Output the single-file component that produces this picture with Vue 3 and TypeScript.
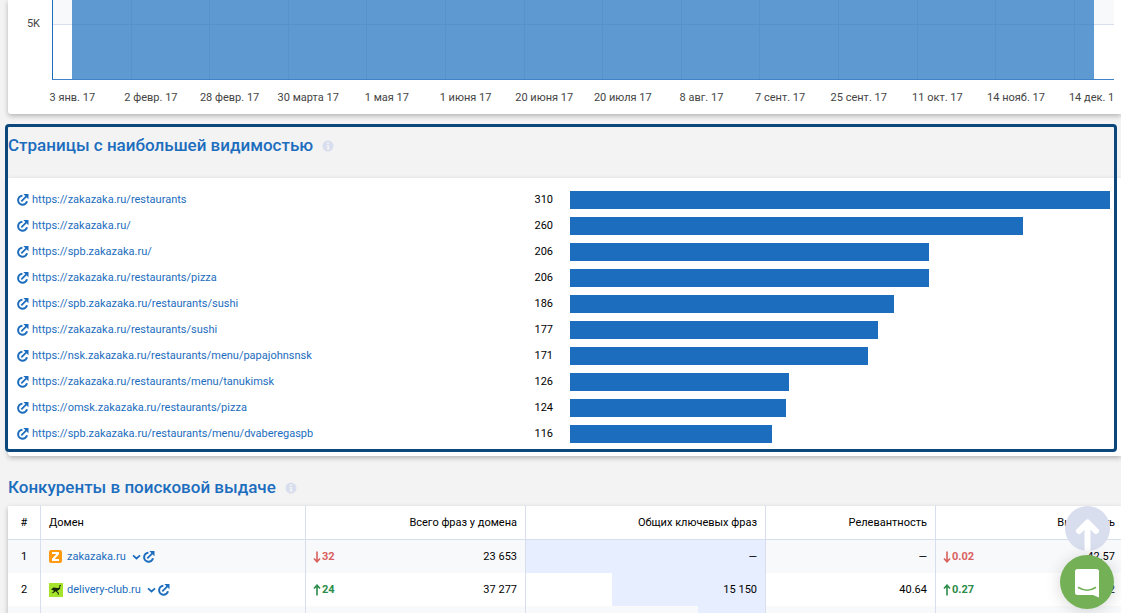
<script setup lang="ts">
interface PageRow {
  url: string
  count: number
}

interface Competitor {
  id: number
  domain: string
  logo: 'z' | 'ostrich'
  phrases: string
  phrasesDelta: number
  common: string
  share: number
  relevance: string
  visibility: string
  visibilityDelta: number
}

const dates: string[] = [
  '3 янв. 17', '2 февр. 17', '28 февр. 17', '30 марта 17', '1 мая 17', '1 июня 17', '20 июня 17',
  '20 июля 17', '8 авг. 17', '7 сент. 17', '25 сент. 17', '11 окт. 17', '14 нояб. 17', '14 дек. 17',
]

const pages: PageRow[] = [
  { url: 'https://zakazaka.ru/restaurants', count: 310 },
  { url: 'https://zakazaka.ru/', count: 260 },
  { url: 'https://spb.zakazaka.ru/', count: 206 },
  { url: 'https://zakazaka.ru/restaurants/pizza', count: 206 },
  { url: 'https://spb.zakazaka.ru/restaurants/sushi', count: 186 },
  { url: 'https://zakazaka.ru/restaurants/sushi', count: 177 },
  { url: 'https://nsk.zakazaka.ru/restaurants/menu/papajohnsnsk', count: 171 },
  { url: 'https://zakazaka.ru/restaurants/menu/tanukimsk', count: 126 },
  { url: 'https://omsk.zakazaka.ru/restaurants/pizza', count: 124 },
  { url: 'https://spb.zakazaka.ru/restaurants/menu/dvaberegaspb', count: 116 },
]

const maxCount = Math.max(...pages.map((p) => p.count))

const competitors: Competitor[] = [
  {
    id: 1, domain: 'zakazaka.ru', logo: 'z', phrases: '23 653', phrasesDelta: -32,
    common: '—', share: 100, relevance: '—', visibility: '42.57', visibilityDelta: -0.02,
  },
  {
    id: 2, domain: 'delivery-club.ru', logo: 'ostrich', phrases: '37 277', phrasesDelta: 24,
    common: '15 150', share: 64, relevance: '40.64', visibility: '40.12', visibilityDelta: 0.27,
  },
]
</script>

<template>
  <main class="page">
    <svg class="defs" aria-hidden="true">
      <symbol id="external" viewBox="0 0 12 12">
        <path d="M5.4 1.7A4.500 4.500 0 1 0 10 7.200" fill="none" stroke="currentColor" stroke-width="2" />
        <path d="M4.300 7.400 9.300 2.400" fill="none" stroke="currentColor" stroke-width="1.800" />
        <path d="M6.300 0H11.500V5.200Z" fill="currentColor" />
      </symbol>
      <symbol id="info" viewBox="0 0 12 12">
        <circle cx="6" cy="6" r="5.5" fill="#d9deee" />
        <path d="M5.2 2.5h1.8v1.4H5.200zM4.600 4.900H6.900V8.300h.7v1.100H4.600V8.300h.7V6h-.7z" fill="#f3f3f3" />
      </symbol>
      <symbol id="arrow" viewBox="0 0 8 12">
        <path d="M4 11.500V2M1 4.500 4 1.200 7 4.500" fill="none" stroke="currentColor" stroke-width="1.600" />
      </symbol>
    </svg>

    <section class="card chart" aria-label="График">
      <div class="plot-row">
        <span class="y-label">5K</span>
        <div class="plot">
          <div class="area"></div>
          <div class="grid-columns">
            <i v-for="n in 13" :key="n"></i>
          </div>
        </div>
      </div>
      <div class="x-axis">
        <div class="x-labels">
          <span v-for="d in dates" :key="d">{{ d }}</span>
        </div>
      </div>
    </section>

    <section class="top-pages">
      <h2>Страницы с наибольшей видимостью <svg class="info"><use href="#info" /></svg></h2>
      <ul class="card bars">
        <li v-for="p in pages" :key="p.url">
          <div class="page-name">
            <a href="#"><svg class="external"><use href="#external" /></svg>{{ p.url }}</a>
            <span>{{ p.count }}</span>
          </div>
          <div><div class="bar" :style="{ width: (p.count / maxCount) * 100 + '%' }"></div></div>
        </li>
      </ul>
      <div class="highlight"></div>
    </section>

    <section class="competitors">
      <h2>Конкуренты в поисковой выдаче <svg class="info"><use href="#info" /></svg></h2>
      <table class="card">
        <thead>
          <tr>
            <th class="c-id">#</th>
            <th class="c-domain">Домен</th>
            <th class="c-phrases num">Всего фраз у домена</th>
            <th class="c-common num">Общих ключевых фраз</th>
            <th class="c-rel num">Релевантность</th>
            <th class="num">Видимость</th>
          </tr>
        </thead>
        <tbody>
          <tr v-for="c in competitors" :key="c.id">
            <td class="c-id">{{ c.id }}</td>
            <td>
              <div class="domain">
                <svg v-if="c.logo === 'z'" class="logo" viewBox="0 0 14 14">
                  <rect width="13" height="13" rx="2" fill="#ff9a0e" />
                  <path d="M3 3H10M9.500 3.300 3.500 9.700M3 10H10" fill="none" stroke="#fff" stroke-width="2" />
                </svg>
                <svg v-else class="logo" viewBox="0 0 14 14">
                  <rect width="14" height="14" fill="#a5e32d" />
                  <path d="M2 6.500 4.500 4.600 8.500 5 10.300 4.800V2.300L12 2V3H11.200V5.800L9 7.400 7.800 7.900 9.800 9.700 9.600 12H8.800V10.200L6.500 8.200 4.500 10 2.800 10.300V9.500L4.200 9.200 4.800 7.600Z" fill="#15240a" />
                </svg>
                <a href="#">{{ c.domain }}</a>
                <button type="button" class="icon-button" aria-label="Меню">
                  <svg viewBox="0 0 9 6"><path d="M1 1.300 4.500 4.500 8 1.300" fill="none" stroke="currentColor" stroke-width="1.700" /></svg>
                </button>
                <a href="#" aria-label="Открыть сайт"><svg class="external"><use href="#external" /></svg></a>
              </div>
            </td>
            <td class="trend">
              <div class="split">
                <b :class="c.phrasesDelta > 0 ? 'up' : 'down'"><svg class="arrow"><use href="#arrow" /></svg>{{ Math.abs(c.phrasesDelta) }}</b>
                <span>{{ c.phrases }}</span>
              </div>
            </td>
            <td class="num share" :style="{ backgroundSize: c.share + '% 100%' }">{{ c.common }}</td>
            <td class="num">{{ c.relevance }}</td>
            <td class="trend">
              <div class="split">
                <b :class="c.visibilityDelta > 0 ? 'up' : 'down'"><svg class="arrow"><use href="#arrow" /></svg>{{ Math.abs(c.visibilityDelta) }}</b>
                <span>{{ c.visibility }}</span>
              </div>
            </td>
          </tr>
          <tr>
            <td></td><td></td><td></td>
            <td class="share" :style="{ backgroundSize: '28% 100%' }"></td>
            <td></td><td></td>
          </tr>
        </tbody>
      </table>
    </section>

    <button type="button" class="to-top" aria-label="Наверх">
      <svg viewBox="0 0 45 45">
        <path d="M22.500 45V18M14 25 22.500 16.500 31 25" fill="none" stroke="#fff" stroke-width="6" stroke-linecap="round" stroke-linejoin="round" />
      </svg>
    </button>
    <button type="button" class="chat" aria-label="Чат">
      <svg viewBox="0 0 54 54">
        <path d="M17.500 14H36.500Q39 14 39 16.500V42.500L33 40H17.500Q15 40 15 37.500V16.500Q15 14 17.500 14Z" fill="#fff" />
        <path d="M18.500 32.500Q27 38 35.500 32.500" fill="none" stroke="#74b056" stroke-width="1.600" stroke-linecap="round" />
      </svg>
    </button>
  </main>
</template>

<style>
body {
  margin: 0;
  background: #f3f3f3;
}
</style>

<style scoped>
.page {
  box-sizing: border-box;
  height: 100vh;
  overflow: hidden;
  padding-left: 8px;
  background: #f3f3f3;
  font: 11px/16px Roboto, sans-serif;
  color: #000;
}

.defs {
  display: block;
  width: 0;
  height: 0;
}

a {
  color: #1c6dbe;
  text-decoration: none;
}

button {
  padding: 0;
  border: 0;
  background: none;
  cursor: pointer;
}

.card {
  background: #fff;
  border-radius: 0 0 0 3px;
  box-shadow: 0 2px 5px rgba(0, 0, 0, 0.26);
}

.chart {
  padding: 0 7px 8px 0;
  color: #444;
}

.plot-row {
  display: flex;
}

.y-label {
  width: 32px;
  margin-right: 12px;
  padding-top: 16px;
  text-align: right;
}

.plot {
  position: relative;
  flex: 1;
  height: 79px;
  border-left: 1px solid #1c6dbe;
  border-bottom: 1px solid #3f84c8;
  background: linear-gradient(#f8f9fb 24px, #d9deee 24px, #d9deee 25px, #fff 25px);
}

.area {
  height: 79px;
  margin: 0 20px 0 19px;
  background: linear-gradient(#5f99d1 24px, #5791ca 24px, #5791ca 25px, #5f99d1 25px);
}

.grid-columns {
  position: absolute;
  inset: 0 39px 0 0;
  display: flex;
}

.grid-columns i {
  flex: 1;
  border-right: 1px solid #5892cb;
}

.x-axis {
  overflow: hidden;
  margin-left: 25px;
  padding-top: 10px;
}

.x-labels {
  display: grid;
  grid-template-columns: repeat(14, minmax(0, 1fr));
  margin-right: -20px;
  text-align: center;
  white-space: nowrap;
}

h2 {
  display: flex;
  align-items: center;
  gap: 9px;
  margin: 0;
  color: #1c6dbe;
  font-size: 17px;
  line-height: 24px;
  font-weight: 500;
}

.info {
  width: 12px;
  height: 12px;
  margin-top: 2px;
}

.top-pages {
  position: relative;
  padding-top: 19px;
}

.highlight {
  position: absolute;
  inset: 10px 4px 4px -3px;
  border: 3px solid #0c477b;
  border-radius: 4px;
  pointer-events: none;
}

.bars {
  margin: 21px 0 0;
  padding: 9px 11px 9px 9px;
  list-style: none;
}

.bars li {
  display: grid;
  grid-template-columns: minmax(0, 536fr) minmax(0, 540fr);
  gap: 17px;
  align-items: center;
  height: 26px;
}

.page-name {
  display: flex;
  justify-content: space-between;
}

.page-name a {
  display: flex;
  align-items: center;
  gap: 3px;
}

.external {
  display: block;
  width: 12px;
  height: 12px;
}

.bar {
  height: 18px;
  background: #1c6dbe;
}

.competitors {
  padding-top: 19px;
}

table {
  width: 100%;
  margin-top: 7px;
  border-collapse: separate;
  border-spacing: 0;
  table-layout: fixed;
}

th,
td {
  box-sizing: border-box;
  height: 33px;
  padding: 0 8px;
  border-right: 1px solid #d9deee;
  text-align: left;
  vertical-align: middle;
}

th {
  height: 34px;
  border-bottom: 1px solid #d9deee;
  font-weight: 400;
}

th:last-child,
td:last-child {
  padding-right: 6px;
  border-right: 0;
}

tbody tr:nth-child(odd) {
  background: #f8f9fb;
}

.c-id {
  width: 33px;
  padding: 0;
  text-align: center;
}

.c-domain {
  width: 265px;
}

.c-phrases {
  width: 220px;
}

.c-common {
  width: 240px;
}

.c-rel {
  width: 170px;
}

.num {
  text-align: right;
}

.trend {
  padding-left: 7px;
}

.share {
  background: linear-gradient(#e7eeff, #e7eeff) right top no-repeat;
}

.domain {
  display: flex;
  align-items: center;
}

.logo {
  width: 14px;
  height: 14px;
  margin-right: 4px;
}

.icon-button {
  width: 9px;
  height: 6px;
  margin: 0 2px 0 6px;
  color: #1c6dbe;
}

.icon-button svg {
  display: block;
}

.split {
  display: flex;
  justify-content: space-between;
}

.split b {
  display: flex;
  align-items: center;
  gap: 1px;
  font-weight: 700;
}

.arrow {
  width: 8px;
  height: 12px;
}

.up {
  color: #2c8c4a;
}

.down {
  color: #d9605f;
}

.down .arrow {
  transform: rotate(180deg);
}

.to-top,
.chat {
  position: fixed;
  border-radius: 50%;
}

.to-top {
  right: 11px;
  bottom: 62px;
  width: 45px;
  height: 45px;
  overflow: hidden;
  background: #d9deee;
}

.chat {
  right: 7px;
  bottom: 4px;
  width: 54px;
  height: 54px;
  background: #74b056;
  box-shadow: 0 2px 16px rgba(0, 0, 0, 0.16);
}

.to-top svg,
.chat svg {
  display: block;
}
</style>
